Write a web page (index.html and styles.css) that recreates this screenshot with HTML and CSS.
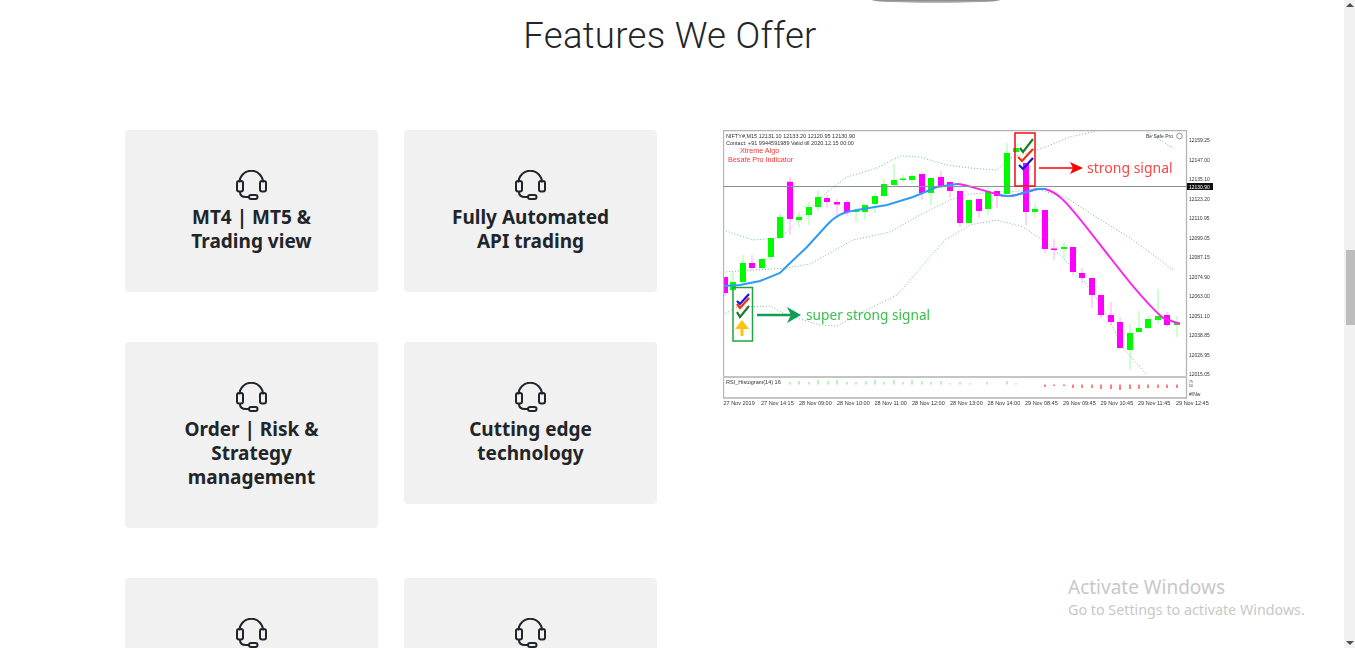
FILE: index.html
```html
<!DOCTYPE html>
<html lang="en">
<head>
    <meta charset="UTF-8">
    <meta name="viewport" content="width=device-width, initial-scale=1.0">
    <title>Features We Offer</title>
    <link rel="stylesheet" href="styles.css">
</head>
<body>
    <svg class="icon-defs" width="0" height="0">
        <symbol id="headset" viewBox="0 0 32 32">
            <path d="M3.5 12.5A11.75 11.75 0 0 1 27 12.5" />
            <rect x="1" y="11" width="6" height="10.5" rx="2" />
            <rect x="24" y="11" width="6" height="10.5" rx="2" />
            <path d="M4 21.5V22Q4 27 10 27H13" />
            <rect x="13" y="25" width="8.5" height="4" rx="2" />
        </symbol>
    </svg>

    <main class="page">
        <div class="hero-edge"></div>
        <h2 class="section-title">Features We Offer</h2>

        <div class="features">
            <div class="card-grid">
                <div class="card">
                    <svg class="card-icon"><use href="#headset" /></svg>
                    <h4>MT4 | MT5 &amp;<br>Trading view</h4>
                </div>
                <div class="card">
                    <svg class="card-icon"><use href="#headset" /></svg>
                    <h4>Fully Automated<br>API trading</h4>
                </div>
                <div class="card">
                    <svg class="card-icon"><use href="#headset" /></svg>
                    <h4>Order | Risk &amp;<br>Strategy<br>management</h4>
                </div>
                <div class="card">
                    <svg class="card-icon"><use href="#headset" /></svg>
                    <h4>Cutting edge<br>technology</h4>
                </div>
                <div class="card card-cut">
                    <svg class="card-icon"><use href="#headset" /></svg>
                </div>
                <div class="card card-cut">
                    <svg class="card-icon"><use href="#headset" /></svg>
                </div>
            </div>

            <svg class="chart" viewBox="723 130 490 278" width="490" height="278">
                <rect x="723" y="130" width="490" height="278" fill="#fff" />

                <!-- bollinger bands -->
                <g class="band">
                    <path d="M723 230L753 240 780 238 807 212 827 192 847 177 877 168 900 156 920 157 947 165 970 168 997 170 1010 158 1043 148 1070 137 1100 130M1147 132L1173 148" />
                    <path d="M723 272L787 268 810 264 853 240 890 232 920 215 950 200 970 194 1000 192 1040 190 1067 198 1093 215 1130 238 1163 262 1173 270" />
                    <path d="M723 315L737 307 770 306 787 315 820 325 837 326 863 312 897 295 917 272 945 240 970 225 997 220 1023 227 1050 245 1080 275 1103 308 1123 348 1147 375" />
                </g>

                <!-- candles: wicks then bodies -->
                <path class="wick-up" d="M733 272V292M743 255V283M762 258V268M771 238V260M780 213V238M799 212V227M809 202V225M818 190V211M856 208V222M865 205V220M875 193V213M884 179V197M894 164V187M903 175V182M912 174V184M931 178V205M969 200V223M988 187V215M1007 143V194M1016 143V156M1035 203V218M1064 242V259M1130 324V370M1139 311V332M1148 316V329M1158 289V324M1177 316V337" />
                <path class="wick-down" d="M725 277V296M752 255V270M790 177V235M827 195V208M837 199V215M847 200V216M922 174V200M941 171V188M950 182V198M960 191V227M979 199V218M997 191V208M1026 163V225M1045 210V253M1054 239V260M1073 247V275M1082 268V283M1092 278V308M1101 295V318M1111 302V325M1120 317V349M1167 312V326" />
                <path class="body-up" d="M733 282V290M743 263V282M762 259V268M771 238V257M780 217V238M799 217V220M809 207V215M818 197V207M856 210V212M865 205V212M875 196V204M884 184V196M894 180V185M903 178.5V180M912 176V180M931 178V193M969 200V223M988 191V209M1007 153V194M1016 148V152M1035 209V212M1064 247V249M1130 333V350M1139 328V332M1148 319V328M1158 316V320M1177 322V325" />
                <path class="body-down" d="M725 277V293M752 263V268M790 181.700V219M827 198V202M837 202V204.500M847 202V212M922 174V193M941 177V187M950 182V191M960 191V223M979 199V211M997 191V196M1026 163V212M1045 210V249M1054 248.500V250M1073 247V272M1082 273V278M1092 278V295M1101 295V315M1111 315V322M1120 322V348M1167 315V325" />

                <!-- moving averages -->
                <path class="ma-pink" d="M957 184C965 184 980 190 1000 195C1010 198 1020 194 1037 189H1045C1057 192 1065 200 1087 228L1116 265C1130 283 1147 304 1163 318L1180 324" />
                <path class="ma-blue" d="M723 286L740 285 760 281 780 273 788 265 807 247 827 225C835 216 843 212 857 210L887 205 913 197 937 187 957 184" />
                <path class="ma-blue" d="M1000 195C1010 198 1020 194 1037 189H1045" />

                <!-- frame -->
                <path class="frame" d="M723.500 130V398M723 130.500H1187M1186.500 130V398M723 398H1187" />
                <path class="level" d="M723 186.500H1187" />
                <path class="pane-split" d="M723 377H1187" />
                <rect class="price-tag" x="1187" y="183" width="26" height="7" />
                <text class="price-tag-text" x="1189" y="188.500">12130.90</text>

                <!-- header texts -->
                <text class="chart-label" x="726" y="137.500">NIFTY#,M15  12131.10 12133.20 12120.95 12130.90</text>
                <text class="chart-label" x="726" y="144.500">Contact: +91 9944591989 Valid till 2020.12.15 00:00</text>
                <text class="chart-red" x="740" y="153">Xtreme Algo</text>
                <text class="chart-red" x="728" y="161.500">Besafe Pro Indicator</text>
                <text class="chart-small" x="1146" y="137.500">Be Safe Pro</text>
                <circle cx="1179.500" cy="136" r="2.800" fill="none" stroke="#666" stroke-width=".7" />

                <!-- price axis -->
                <g class="chart-small">
                    <text x="1189" y="142">12159.25</text>
                    <text x="1189" y="162">12147.00</text>
                    <text x="1189" y="181">12135.10</text>
                    <text x="1189" y="201">12123.20</text>
                    <text x="1189" y="220">12110.95</text>
                    <text x="1189" y="240">12099.05</text>
                    <text x="1189" y="259">12087.15</text>
                    <text x="1189" y="279">12074.90</text>
                    <text x="1189" y="298">12063.00</text>
                    <text x="1189" y="318">12051.10</text>
                    <text x="1189" y="337">12038.85</text>
                    <text x="1189" y="357">12026.95</text>
                    <text x="1189" y="376">12015.05</text>
                    <text class="chart-tiny" x="1189" y="383">75</text>
                    <text class="chart-tiny" x="1189" y="386.500">50</text>
                    <text x="1189" y="396">#/Nw</text>
                </g>

                <!-- rsi pane -->
                <text class="chart-label" x="726" y="384">RSI_Histogram(14) 16</text>
                <path class="rsi-up" d="M790 384.500V382M799 384.500V381M809 384.500V382M818 384.500V380M828 384.500V381M837 384.500V380M847 384.500V382M856 384.500V382M866 384.500V381M875 384.500V380M884 384.500V382M894 384.500V380M903 384.500V382M912 384.500V380M922 384.500V381M931 384.500V382M941 384.500V381M950 384.500V383M960 384.500V382M970 384.500V383M987 384.500V382M1007 384.500V381M1016 384.500V383" />
                <path class="rsi-down" d="M1045 384.500V387M1054 384.500V386M1064 384.500V386M1073 384.500V388M1082 384.500V388M1092 384.500V388M1101 384.500V389M1111 384.500V389M1120 384.500V390M1130 384.500V389M1139 384.500V389M1148 384.500V388M1158 384.500V388M1167 384.500V388M1177 384.500V388" />

                <!-- time axis -->
                <g class="chart-label">
                    <text x="723.500" y="405">27 Nov 2019</text>
                    <text x="761" y="405">27 Nov 14:15</text>
                    <text x="799" y="405">28 Nov 09:00</text>
                    <text x="837" y="405">28 Nov 10:00</text>
                    <text x="874.500" y="405">28 Nov 11:00</text>
                    <text x="912" y="405">28 Nov 12:00</text>
                    <text x="950" y="405">28 Nov 13:00</text>
                    <text x="987.500" y="405">28 Nov 14:00</text>
                    <text x="1025" y="405">29 Nov 08:45</text>
                    <text x="1063" y="405">29 Nov 09:45</text>
                    <text x="1100.500" y="405">29 Nov 10:45</text>
                    <text x="1138" y="405">29 Nov 11:45</text>
                    <text x="1176" y="405">29 Nov 12:45</text>
                </g>

                <!-- strong signal note -->
                <rect class="note-red" x="1015" y="133" width="20" height="53" />
                <path class="check-dark" d="M1020 148L1023 152 1033 139" />
                <path class="check-red" d="M1018 157L1022 161 1033 149" />
                <path class="check-blue" d="M1019 165L1023 169 1033 158" />
                <path class="arrow-red" d="M1039 168H1076" />
                <path d="M1070 162L1083 168 1070 174 1073 168Z" fill="#f00" />
                <text class="signal-red" x="1087" y="173">strong signal</text>

                <!-- super strong signal note -->
                <rect class="note-green" x="733" y="287.500" width="19.500" height="53.500" />
                <path class="check-blue" d="M737 301L740 304 749 294" />
                <path class="check-red" d="M737 304L740 308 749 298" />
                <path class="check-dark" d="M737 312L740 317 749 306" />
                <path class="arrow-yellow" d="M742 336V326" />
                <path d="M735 329L742 320 749 329Z" fill="#ffc20e" />
                <path class="arrow-green" d="M757 315H794" />
                <path d="M787 307L801 315 787 323 791 315Z" fill="#0f9d58" />
                <text class="signal-green" x="806" y="320">super strong signal</text>
            </svg>
        </div>

        <div class="watermark">
            <p class="watermark-title">Activate Windows</p>
            <p class="watermark-text">Go to Settings to activate Windows.</p>
        </div>
    </main>

    <aside class="scrollbar">
        <span class="arrow-up"></span>
        <span class="thumb"></span>
        <span class="arrow-down"></span>
    </aside>
</body>
</html>
```

FILE: styles.css
```css
body {
    font-family: "Noto Sans", sans-serif;
    background-color: #fff;
    margin: 0;
    padding: 0;
    display: flex;
    height: 100vh;
    overflow: hidden;
}

.icon-defs {
    position: absolute;
}

.page {
    flex: 1;
    position: relative;
    overflow: hidden;
}

.hero-edge {
    width: 128px;
    height: 3px;
    margin-left: 872px;
    border-radius: 0 0 50% 50% / 0 0 100% 100%;
    background: linear-gradient(#858585, #c4c4c4);
}

.section-title {
    margin: 0 4px 0 0;
    padding-top: 10px;
    font-family: Roboto, sans-serif;
    font-size: 36.5px;
    font-weight: 300;
    letter-spacing: 0.3px;
    line-height: 46px;
    text-align: center;
    color: #212529;
}

.features {
    display: flex;
    align-items: flex-start;
    gap: 66px;
    padding: 71px 0 0 125px;
}

.card-grid {
    display: grid;
    grid-template-columns: 253px 253px;
    column-gap: 26px;
    row-gap: 50px;
    align-items: start;
}

.card {
    padding: 40px 10px 39px;
    background-color: #f1f1f1;
    border-radius: 4px;
    text-align: center;
}

.card-cut {
    min-height: 83px;
}

.card-icon {
    display: block;
    width: 32px;
    height: 32px;
    margin: 0 auto 3px;
    fill: none;
    stroke: #212529;
    stroke-width: 2;
}

.card h4 {
    margin: 0;
    font-size: 19px;
    font-weight: 700;
    line-height: 24px;
    color: #212529;
}

.chart {
    display: block;
    flex: none;
    filter: blur(0.5px);
    font-family: "Liberation Sans", sans-serif;
}

.band path {
    fill: none;
    stroke: #6fbf8a;
    stroke-width: 1;
    stroke-dasharray: 1 2;
}

.wick-up,
.wick-down,
.body-up,
.body-down,
.ma-blue,
.ma-pink,
.frame,
.level,
.pane-split,
.rsi-up,
.rsi-down,
.note-red,
.note-green,
.check-dark,
.check-red,
.check-blue,
.arrow-red,
.arrow-green,
.arrow-yellow {
    fill: none;
}

.wick-up {
    stroke: #9dff9d;
    stroke-width: 1;
}

.wick-down {
    stroke: #ffa8ff;
    stroke-width: 1;
}

.body-up {
    stroke: #00fa00;
    stroke-width: 6;
}

.body-down {
    stroke: #ff00ff;
    stroke-width: 6;
}

.ma-blue {
    stroke: #2f9bf4;
    stroke-width: 2;
}

.ma-pink {
    stroke: #ff22ee;
    stroke-width: 2;
}

.frame {
    stroke: #b4b4b4;
    stroke-width: 1.3;
}

.level {
    stroke: #8a8f9a;
    stroke-width: 1;
}

.pane-split {
    stroke: #c4c4c4;
    stroke-width: 2;
}

.price-tag {
    fill: #111;
}

.price-tag-text {
    font-size: 5px;
    fill: #fff;
}

.chart-small {
    font-size: 5px;
    fill: #333;
}

.chart-tiny {
    font-size: 3.500px;
}

.chart-label {
    font-size: 5.500px;
    fill: #333;
}

.chart-red {
    font-size: 7.200px;
    fill: #f33;
}

.rsi-up {
    stroke: #5fd85f;
    stroke-width: 0.8;
}

.rsi-down {
    stroke: #f00;
    stroke-width: 1;
}

.note-red {
    stroke: #f01010;
    stroke-width: 1.5;
}

.note-green {
    stroke: #1fa34a;
    stroke-width: 1.5;
}

.check-dark {
    stroke: #1f7a2a;
    stroke-width: 2.2;
}

.check-red {
    stroke: #f03010;
    stroke-width: 2.2;
}

.check-blue {
    stroke: #1515e0;
    stroke-width: 2.2;
}

.arrow-red {
    stroke: #f00;
    stroke-width: 1.6;
}

.arrow-green {
    stroke: #0f9d58;
    stroke-width: 2.5;
}

.arrow-yellow {
    stroke: #ffc20e;
    stroke-width: 3;
}

.signal-red {
    font-family: "Noto Sans", sans-serif;
    font-size: 14px;
    fill: #f44;
}

.signal-green {
    font-family: "Noto Sans", sans-serif;
    font-size: 13.700px;
    fill: #39bf4a;
}

.watermark {
    position: absolute;
    left: 1068px;
    top: 575px;
    color: #c8c8c8;
}

.watermark p {
    margin: 0;
}

.watermark-title {
    font-size: 19px;
    line-height: 25px;
}

.watermark-text {
    font-size: 14.300px;
    line-height: 20px;
}

.scrollbar {
    flex: none;
    width: 11px;
    display: flex;
    flex-direction: column;
    align-items: flex-end;
    background-color: #f1f1f1;
}

.arrow-up,
.arrow-down {
    display: block;
    width: 0;
    height: 0;
    margin-right: 1px;
    border-left: 4px solid transparent;
    border-right: 4px solid transparent;
}

.arrow-up {
    margin-top: 3px;
    border-bottom: 4px solid #505050;
}

.arrow-down {
    margin-top: auto;
    margin-bottom: 3px;
    border-top: 4px solid #505050;
}

.thumb {
    display: block;
    width: 9px;
    height: 75px;
    margin-top: 243px;
    background-color: #bdbdbd;
}
```
